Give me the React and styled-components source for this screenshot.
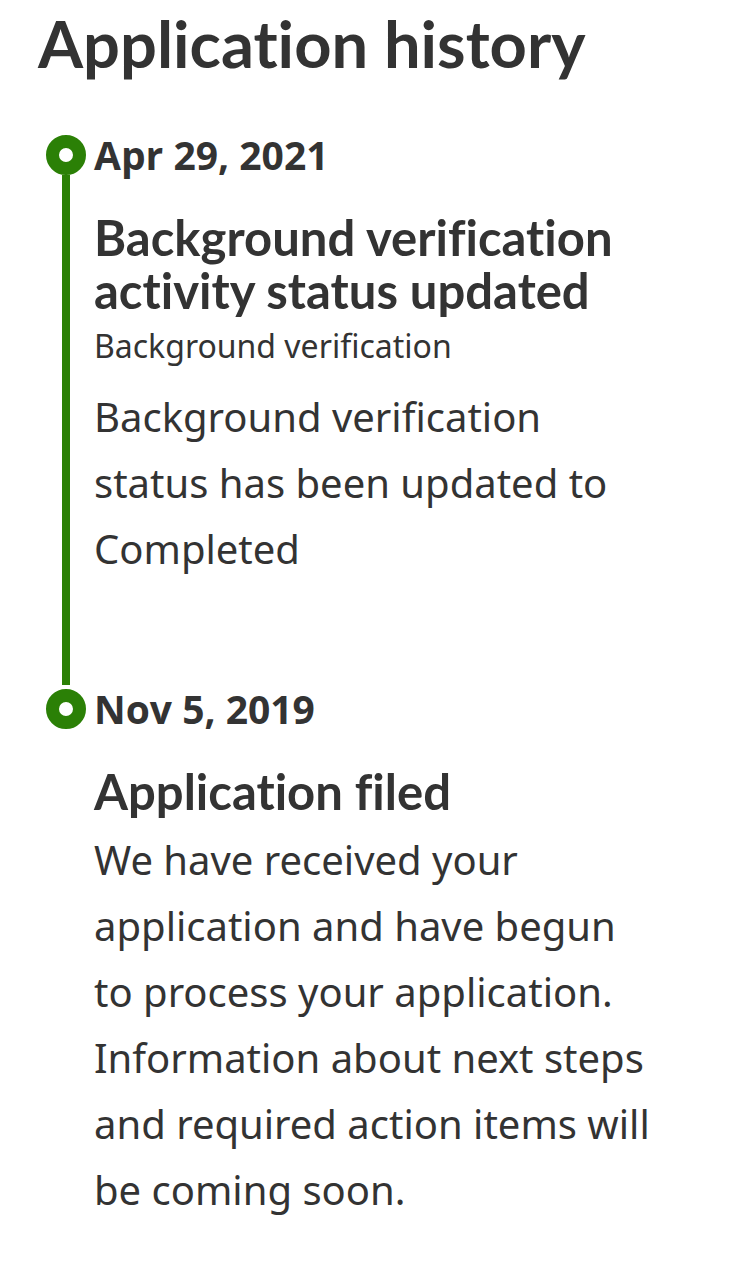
import styled, { createGlobalStyle } from "styled-components"

const GlobalStyle = createGlobalStyle`
    body {
        margin: 0;
        background: #ffffff;
        color: #333333;
        font-variant-ligatures: none;
    }
`
const Page = styled.div`
    padding: 5px 0 40px 38px;
`
const Heading = styled.h1`
    margin: 0 0 50px 0;
    font-family: Lato, "Liberation Sans", sans-serif;
    font-weight: 700;
    font-size: 65px;
    line-height: 76px;
    color: #333333;
`
const Timeline = styled.div`
    display: flex;
    flex-direction: column;
    padding-left: 8px;
`
const Event = styled.div`
    display: flex;
    gap: 8px;
`
const Rail = styled.div`
    display: flex;
    flex-direction: column;
    align-items: center;
    width: 40px;
    flex-shrink: 0;
    padding-top: 4px;
`
const Dot = styled.div`
    width: 40px;
    height: 40px;
    box-sizing: border-box;
    border-radius: 50%;
    border: 13px solid #2b8006;
    background: #ffffff;
`
const Line = styled.div`
    flex: 1;
    width: 8px;
    background: #2b8006;
`
const Content = styled.div`
    width: 566px;
    padding-bottom: ${props => props.last ? "0" : "103px"};
`
const Date = styled.div`
    font-family: "Open Sans", "Noto Sans", sans-serif;
    font-weight: 700;
    font-size: 39px;
    line-height: 48px;
    margin-bottom: 32px;
`
const Title = styled.h2`
    margin: 0;
    font-family: Lato, "Liberation Sans", sans-serif;
    font-weight: 700;
    font-size: 49px;
    line-height: 53px;
`
const Category = styled.div`
    margin: 4px 0 13px 0;
    font-family: "Noto Sans", "Open Sans", sans-serif;
    font-size: 32px;
    line-height: 50px;
`
const Body = styled.p`
    margin: 9px 0 0 0;
    font-family: "Noto Sans", "Open Sans", sans-serif;
    font-size: 40px;
    line-height: 66px;
`

const events = [
    {
        date: "Apr 29, 2021",
        title: "Background verification activity status updated",
        category: "Background verification",
        body: "Background verification status has been updated to Completed",
    },
    {
        date: "Nov 5, 2019",
        title: "Application filed",
        body: "We have received your application and have begun to process your application. Information about next steps and required action items will be coming soon.",
    },
]

export default function App() {
    return (
        <Page>
            <GlobalStyle />
            <Heading>Application history</Heading>
            <Timeline>
                {
                    events.map((event, i) => {
                        const last = i === events.length - 1
                        return (
                            <Event key={event.date}>
                                <Rail>
                                    <Dot />
                                    {!last && <Line />}
                                </Rail>
                                <Content last={last}>
                                    <Date>{event.date}</Date>
                                    <Title>{event.title}</Title>
                                    {event.category && <Category>{event.category}</Category>}
                                    <Body>{event.body}</Body>
                                </Content>
                            </Event>
                        )
                    })
                }
            </Timeline>
        </Page>
    );
}
